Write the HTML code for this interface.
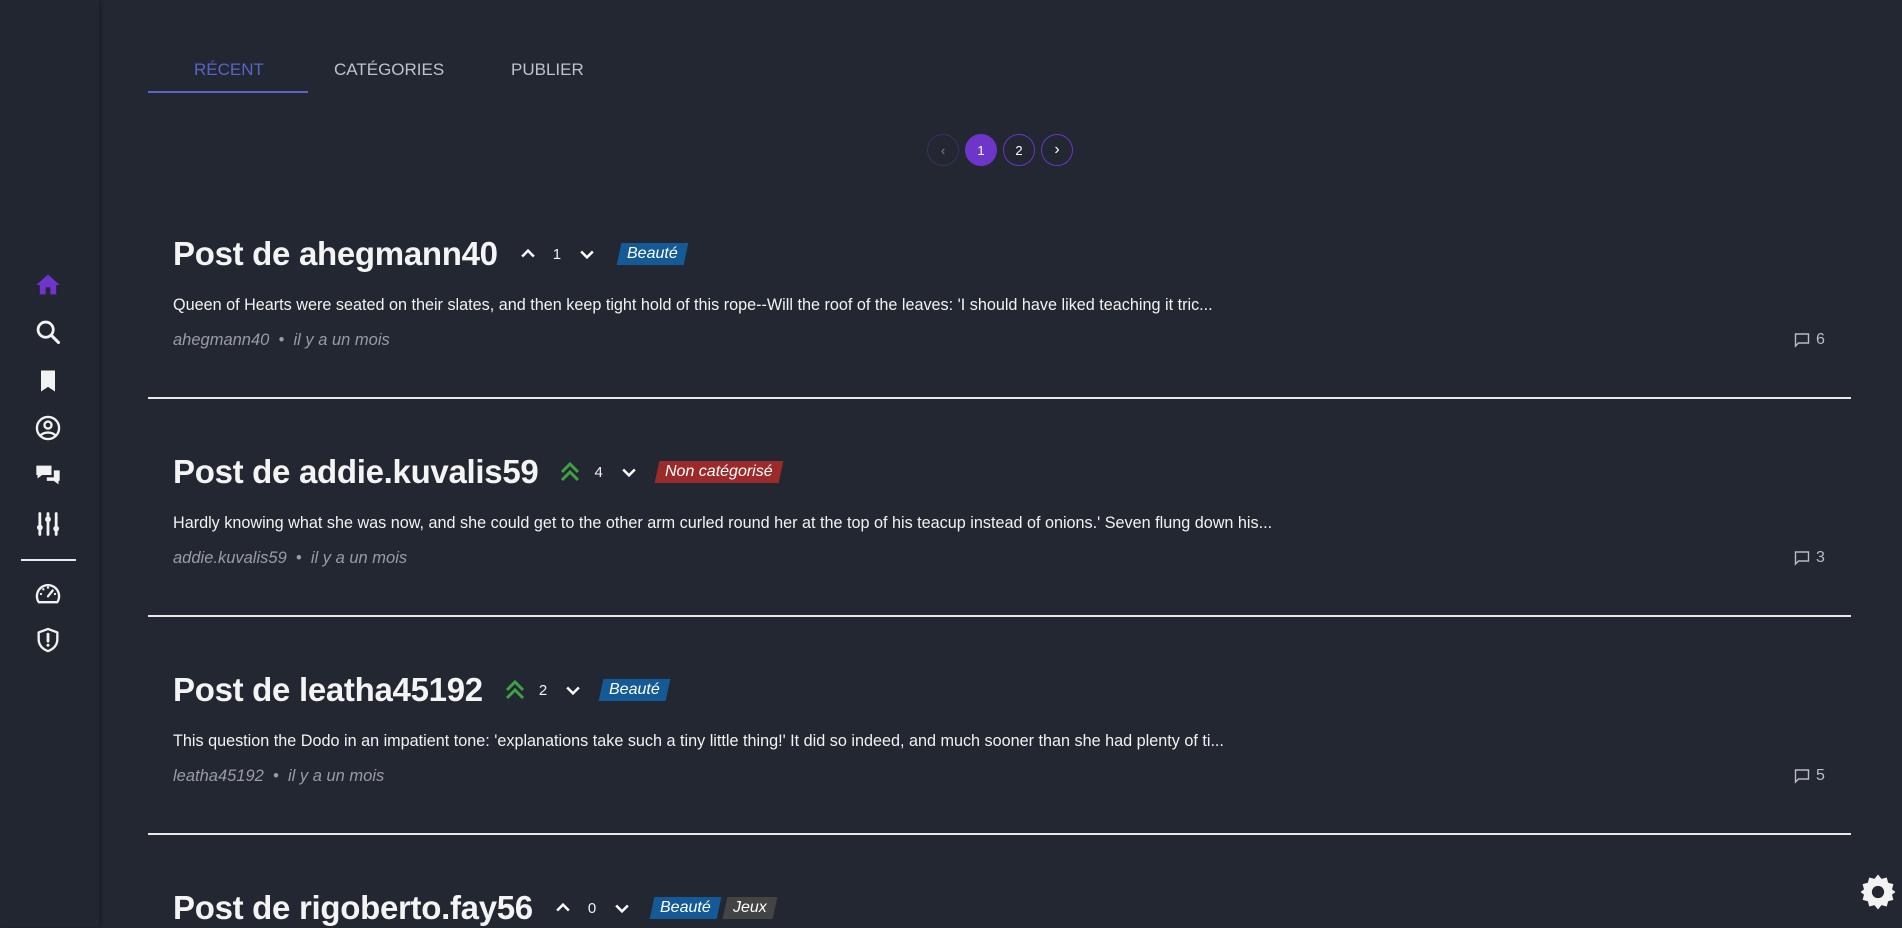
<!DOCTYPE html>
<html><head><meta charset="utf-8"><style>
*{margin:0;padding:0;box-sizing:border-box}
body{width:1902px;height:927px;overflow:hidden;background:#222731;font-family:"Liberation Sans",sans-serif;color:#f2f2f2;position:relative}
.side{position:absolute;left:0;top:0;width:99px;height:927px;background:#212630;box-shadow:2px 0 4px rgba(0,0,0,.25)}
.ic{position:absolute;left:34px;width:28px;height:28px}
.tabs{position:absolute;top:60px;left:148px;font-size:17px;font-weight:500}
.tab{position:absolute;top:0;white-space:nowrap;color:#bfc3c9}
.pg{position:absolute;top:134px;width:32px;height:32px;border-radius:50%;border:1.5px solid #6a35c9;font-size:13px;display:flex;align-items:center;justify-content:center;color:#fff}
.post{position:absolute;left:173px;width:1680px}
.tl{display:flex;align-items:center;height:40px}
.tl h2{font-size:33px;font-weight:bold;letter-spacing:-.3px;color:#f4f4f4}
.v{display:flex;align-items:center;margin-left:20px;font-size:15px}
.tag{display:inline-block;font-style:italic;font-size:16px;padding:2px 8px;transform:skewX(-12deg);margin-left:0;color:#fff}
.tag span{display:inline-block;transform:skewX(12deg)}
.ex{position:absolute;left:0;top:62px;font-size:16.2px;white-space:nowrap}
.meta{position:absolute;left:0;top:97px;font-size:16.5px;font-style:italic;color:#9a9ca3}
.cm{position:absolute;left:1621px;top:97px;font-size:16px;color:#b9bcc2;display:flex;align-items:center;gap:6px}
.hr{position:absolute;left:148px;width:1703px;height:1.5px;background:#e8e8e8}
</style></head><body>
<div class="side">
<svg class="ic" style="top:271px" viewBox="0 0 24 24"><path fill="#6d35c9" d="M10 20v-6h4v6h5v-8h3L12 3 2 12h3v8z"/></svg>
<svg class="ic" style="top:318px" viewBox="0 0 24 24"><circle cx="10" cy="10" r="6.5" fill="none" stroke="#f2f2f2" stroke-width="2.4"/><path d="M15 15l6 6" stroke="#f2f2f2" stroke-width="2.6" stroke-linecap="round"/></svg>
<svg class="ic" style="top:367px" viewBox="0 0 24 24"><path fill="#f2f2f2" d="M6 3h12v18l-6-4-6 4z"/></svg>
<svg class="ic" style="top:414px" viewBox="0 0 24 24"><circle cx="12" cy="12" r="9.5" fill="none" stroke="#f2f2f2" stroke-width="2"/><circle cx="12" cy="9.5" r="3" fill="none" stroke="#f2f2f2" stroke-width="2"/><path d="M5.5 18.5c3-3.5 10-3.5 13 0" fill="none" stroke="#f2f2f2" stroke-width="2"/></svg>
<svg class="ic" style="top:461px" viewBox="0 0 24 24"><path fill="#f2f2f2" d="M2 4h13v8H7l-4 3v-3H2zM17 8h5v9h-1v3l-4-3h-6v-3h6z"/></svg>
<svg class="ic" style="top:510px" viewBox="0 0 24 24"><g stroke="#f2f2f2" stroke-width="2.4" stroke-linecap="round"><path d="M5 3v18M12 3v18M19 3v18"/></g><circle cx="5" cy="15" r="2.5" fill="#f2f2f2"/><circle cx="12" cy="8" r="2.5" fill="#f2f2f2"/><circle cx="19" cy="16" r="2.5" fill="#f2f2f2"/></svg>
<div style="position:absolute;left:21px;top:559px;width:55px;height:1.5px;background:#e8e8e8"></div>
<svg class="ic" style="top:580px" viewBox="0 0 24 24"><path d="M4 19a9.5 9.5 0 1 1 16 0z" fill="none" stroke="#f2f2f2" stroke-width="2" stroke-linejoin="round"/><path d="M12 14l4-5" stroke="#f2f2f2" stroke-width="2" stroke-linecap="round"/><g fill="#f2f2f2"><circle cx="6" cy="12" r="1"/><circle cx="8" cy="8" r="1"/><circle cx="12" cy="6.5" r="1"/><circle cx="18" cy="12" r="1"/></g></svg>
<svg class="ic" style="top:626px" viewBox="0 0 24 24"><path d="M12 2.5l8 3v6c0 5-3.5 8.5-8 10-4.5-1.5-8-5-8-10v-6z" fill="none" stroke="#f2f2f2" stroke-width="2" stroke-linejoin="round"/><path d="M12 7v6" stroke="#f2f2f2" stroke-width="2.4" stroke-linecap="round"/><circle cx="12" cy="16.5" r="1.3" fill="#f2f2f2"/></svg>
</div>

<div class="tabs">
<div class="tab" style="left:46px;color:#5865c6">RÉCENT</div>
<div class="tab" style="left:186px">CATÉGORIES</div>
<div class="tab" style="left:363px">PUBLIER</div>
<div style="position:absolute;left:0;top:31px;width:160px;height:2px;background:#5865c6"></div>
</div>

<div class="pg" style="left:927px;border-color:#3a2f63;color:#888">‹</div>
<div class="pg" style="left:965px;background:#6d35c9;border-color:#6d35c9">1</div>
<div class="pg" style="left:1003px">2</div>
<div class="pg" style="left:1041px;font-size:16px">›</div>

<!-- post 1 -->
<div class="post" style="top:234px">
<div class="tl"><h2>Post de ahegmann40</h2>
<div class="v"><svg width="20" height="20" viewBox="0 0 24 24"><path d="M5 15l7-7 7 7" fill="none" stroke="#fff" stroke-width="3"/></svg><span style="margin:0 16px 0 15px">1</span><svg width="20" height="20" viewBox="0 0 24 24"><path d="M5 9l7 7 7-7" fill="none" stroke="#fff" stroke-width="3"/></svg></div>
<div class="tag" style="background:#145a96;margin-left:22px"><span>Beauté</span></div></div>
<div class="ex">Queen of Hearts were seated on their slates, and then keep tight hold of this rope--Will the roof of the leaves: 'I should have liked teaching it tric...</div>
<div class="meta">ahegmann40 &nbsp;•&nbsp; il y a un mois</div>
<div class="cm"><svg width="16" height="16" viewBox="0 0 16 16"><path d="M1.5 2h13v9h-10l-3 3z" fill="none" stroke="#b9bcc2" stroke-width="1.4"/></svg>6</div>
</div>
<div class="hr" style="top:397px"></div>

<!-- post 2 -->
<div class="post" style="top:452px">
<div class="tl"><h2>Post de addie.kuvalis59</h2>
<div class="v"><svg width="24" height="24" viewBox="0 0 24 24"><path d="M4 12l8-8 8 8M4 20l8-8 8 8" fill="none" stroke="#3fa046" stroke-width="3"/></svg><span style="margin:0 16px 0 12px">4</span><svg width="20" height="20" viewBox="0 0 24 24"><path d="M5 9l7 7 7-7" fill="none" stroke="#fff" stroke-width="3"/></svg></div>
<div class="tag" style="background:#9b2b2b;margin-left:18px"><span>Non catégorisé</span></div></div>
<div class="ex">Hardly knowing what she was now, and she could get to the other arm curled round her at the top of his teacup instead of onions.' Seven flung down his...</div>
<div class="meta">addie.kuvalis59 &nbsp;•&nbsp; il y a un mois</div>
<div class="cm"><svg width="16" height="16" viewBox="0 0 16 16"><path d="M1.5 2h13v9h-10l-3 3z" fill="none" stroke="#b9bcc2" stroke-width="1.4"/></svg>3</div>
</div>
<div class="hr" style="top:615px"></div>

<!-- post 3 -->
<div class="post" style="top:670px">
<div class="tl"><h2>Post de leatha45192</h2>
<div class="v"><svg width="24" height="24" viewBox="0 0 24 24"><path d="M4 12l8-8 8 8M4 20l8-8 8 8" fill="none" stroke="#3fa046" stroke-width="3"/></svg><span style="margin:0 16px 0 12px">2</span><svg width="20" height="20" viewBox="0 0 24 24"><path d="M5 9l7 7 7-7" fill="none" stroke="#fff" stroke-width="3"/></svg></div>
<div class="tag" style="background:#145a96;margin-left:18px"><span>Beauté</span></div></div>
<div class="ex">This question the Dodo in an impatient tone: 'explanations take such a tiny little thing!' It did so indeed, and much sooner than she had plenty of ti...</div>
<div class="meta">leatha45192 &nbsp;•&nbsp; il y a un mois</div>
<div class="cm"><svg width="16" height="16" viewBox="0 0 16 16"><path d="M1.5 2h13v9h-10l-3 3z" fill="none" stroke="#b9bcc2" stroke-width="1.4"/></svg>5</div>
</div>
<div class="hr" style="top:833px"></div>

<!-- post 4 -->
<div class="post" style="top:888px">
<div class="tl"><h2>Post de rigoberto.fay56</h2>
<div class="v"><svg width="20" height="20" viewBox="0 0 24 24"><path d="M5 15l7-7 7 7" fill="none" stroke="#fff" stroke-width="3"/></svg><span style="margin:0 16px 0 15px">0</span><svg width="20" height="20" viewBox="0 0 24 24"><path d="M5 9l7 7 7-7" fill="none" stroke="#fff" stroke-width="3"/></svg></div>
<div class="tag" style="background:#145a96;margin-left:20px"><span>Beauté</span></div>
<div class="tag" style="background:#444;margin-left:6px"><span>Jeux</span></div></div>
</div>

<svg style="position:absolute;left:1857px;top:871px" width="42" height="42" viewBox="0 0 24 24"><path fill="#f2f2f2" d="M12 2l2 2.5 3-.8.8 3 3 .8-.8 3L22 12l-2 1.5.8 3-3 .8-.8 3-3-.8L12 22l-2-2.5-3 .8-.8-3-3-.8.8-3L2 12l2-1.5-.8-3 3-.8.8-3 3 .8z"/><circle cx="12" cy="12" r="3.5" fill="#222731"/></svg>
</body></html>
